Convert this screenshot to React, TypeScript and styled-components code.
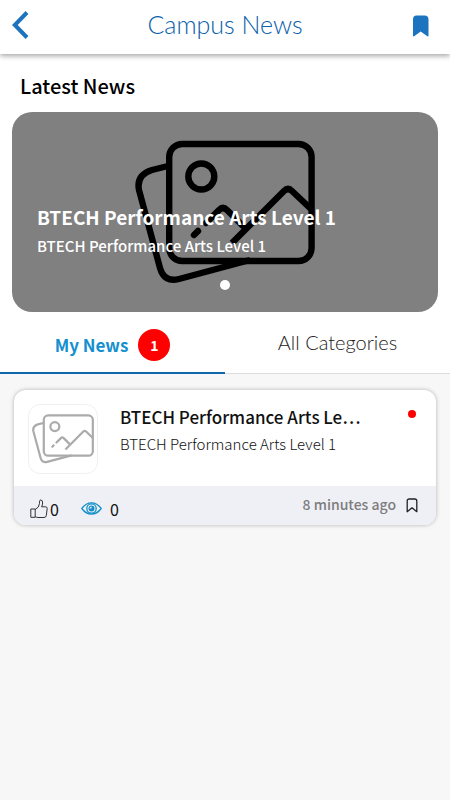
import React from "react";
import styled, { createGlobalStyle } from "styled-components";

const sans = `"Noto Sans CJK KR", "Noto Sans", sans-serif`;
const light = `Lato, "Open Sans", sans-serif`;

const GlobalStyle = createGlobalStyle`
  * { box-sizing: border-box; }
  body { margin: 0; background: #f7f7f7; font-family: ${sans}; color: #000; }
  button { border: 0; padding: 0; margin: 0; background: none; font: inherit; color: inherit; cursor: pointer; }
  h1, h2, h3, p { margin: 0; }
  svg { display: block; }
`;

const Page = styled.div`
  display: flex;
  flex-direction: column;
  min-height: 100vh;
`;

const Header = styled.header`
  display: grid;
  grid-template-columns: 1fr auto 1fr;
  align-items: center;
  height: 54px;
  padding: 0 12px 4px;
  background: #fff;
  box-shadow: 0 2px 5px rgba(0, 0, 0, 0.35);
  z-index: 1;
`;

const HeaderTitle = styled.h1`
  padding-bottom: 2px;
  font-family: ${light};
  font-weight: 300;
  font-size: 25px;
  line-height: 32px;
  color: #0a60ab;
`;

const IconButton = styled.button<{ $end?: boolean }>`
  && {
    display: flex;
    align-items: center;
    justify-self: ${(p) => (p.$end ? "end" : "start")};
    padding-right: ${(p) => (p.$end ? 8 : 0)}px;
    color: #1b74bd;
  }
`;

const Latest = styled.section`
  padding: 16px 12px 0;
  background: #fff;
`;

const SectionTitle = styled.h2`
  padding-left: 8px;
  margin-bottom: 10px;
  font-weight: 500;
  font-size: 20px;
  line-height: 32px;
`;

const Hero = styled.article`
  position: relative;
  display: flex;
  justify-content: center;
  align-items: flex-start;
  height: 200px;
  padding-top: 28px;
  border-radius: 20px;
  background: #808080;
`;

const HeroText = styled.div`
  position: absolute;
  left: 25px;
  right: 25px;
  top: 90px;
  color: #fff;
`;

const HeroTitle = styled.h3`
  font-weight: 700;
  font-size: 19px;
  line-height: 30px;
`;

const HeroSubtitle = styled.p`
  font-weight: 500;
  font-size: 15px;
  line-height: 28px;
`;

const PagerDot = styled.button`
  && {
    position: absolute;
    bottom: 22px;
    left: calc(50% - 5px);
    width: 10px;
    height: 10px;
    border-radius: 50%;
    background: #fff;
  }
`;

const Tabs = styled.div`
  display: grid;
  grid-template-columns: 1fr 1fr;
  height: 62px;
  background: #fff;
`;

const Tab = styled.button<{ $active?: boolean }>`
  && {
    display: flex;
    align-items: center;
    justify-content: center;
    gap: 10px;
    padding-top: ${(p) => (p.$active ? 6 : 0)}px;
    padding-bottom: ${(p) => (p.$active ? 0 : 2)}px;
    border-bottom: ${(p) => (p.$active ? "2px solid #0e68ab" : "1px solid #dcdcdc")};
    color: ${(p) => (p.$active ? "#1590cf" : "#222")};
    font-family: ${(p) => (p.$active ? sans : light)};
    font-weight: ${(p) => (p.$active ? 700 : 300)};
    font-size: ${(p) => (p.$active ? 17 : 20)}px;
    line-height: 28px;
  }
`;

const Badge = styled.span`
  width: 32px;
  height: 32px;
  border-radius: 50%;
  background: #f00;
  color: #fff;
  font-size: 14px;
  line-height: 32px;
  text-align: center;
`;

const Feed = styled.main`
  flex: 1;
  padding: 16px 14px;
`;

const Card = styled.article`
  overflow: hidden;
  border-radius: 12px;
  background: #fff;
  box-shadow: 0 0 4px rgba(0, 0, 0, 0.28);
`;

const CardBody = styled.div`
  display: flex;
  align-items: flex-start;
  height: 96px;
  padding: 14px 20px 0 14px;
`;

const Thumb = styled.div`
  display: flex;
  align-items: center;
  justify-content: center;
  flex: none;
  width: 70px;
  height: 70px;
  margin-right: 22px;
  border: 1px solid #f0f0f0;
  border-radius: 12px;
  color: #ababab;
`;

const CardText = styled.div`
  flex: 1;
  min-width: 0;
`;

const CardTitle = styled.h3`
  overflow: hidden;
  text-overflow: ellipsis;
  white-space: nowrap;
  font-weight: 500;
  font-size: 17px;
  line-height: 26px;
  color: #111;
`;

const CardSubtitle = styled.p`
  font-weight: 300;
  font-size: 15px;
  line-height: 28px;
  color: #111;
`;

const Unread = styled.span`
  width: 8px;
  height: 8px;
  margin-top: 6px;
  border-radius: 50%;
  background: #f00;
`;

const CardFooter = styled.footer`
  display: flex;
  align-items: center;
  height: 39px;
  padding: 0 18px 0 16px;
  background: #efeff6;
`;

const Stat = styled.button<{ $gap: number }>`
  && {
    display: flex;
    align-items: center;
    gap: ${(p) => p.$gap}px;
    margin-right: 22px;
    padding-top: 6px;
    font-size: 16px;
    line-height: 24px;
    color: #111;
  }
`;

const Time = styled.time`
  margin-left: auto;
  margin-right: 10px;
  padding-bottom: 4px;
  font-weight: 500;
  font-size: 14px;
  line-height: 24px;
  color: #7d7d7d;
`;

const Gallery = ({ width }: { width: number }) => (
  <svg width={width} viewBox="0 0 180 145" fill="none" stroke="currentColor" strokeWidth="6.4" strokeLinecap="round" strokeLinejoin="round" aria-hidden="true">
    <rect x="34.2" y="4" width="142.4" height="117" rx="13" />
    <circle cx="66.3" cy="36.5" r="13" />
    <path strokeLinecap="butt" d="M33 26 17 30Q1 35 4 50L25 128Q29 143 44 139L115 120" />
    <path d="M97 103 149 51Q153 47 157 51L176 69" strokeLinecap="butt" />
    <path d="M71 83 84 70Q88 66 92 70L108 86M59 95 63 91" />
  </svg>
);

const Back = () => (
  <svg width="17" height="28" viewBox="0 0 17 28" fill="none" stroke="currentColor" strokeWidth="4" aria-hidden="true">
    <path d="M15 1.5 2.8 14 15 26.5" />
  </svg>
);

const SavedMark = () => (
  <svg width="18" height="22" viewBox="0 -1 18 22" overflow="visible" fill="currentColor" aria-hidden="true">
    <path d="M4.5.5h8Q16.5.5 16.5 4.5V20.5Q16.5 22 15 21L8.7 16.5 2.5 21Q1 22 1 20.5V4.5Q1 .5 4.5.5Z" />
  </svg>
);

const Bookmark = () => (
  <svg width="12" height="15" viewBox="0 0 12 15" fill="none" stroke="#222" strokeWidth="1.3" strokeLinejoin="round" aria-hidden="true">
    <path d="M1.2 3Q1.2 1 3.2 1H8.8Q10.8 1 10.8 3V13.7L6 9.8 1.2 13.7Z" />
  </svg>
);

const Thumbs = () => (
  <svg width="18" height="20" viewBox="0 0 18 20" fill="none" stroke="#333" strokeWidth="1" strokeLinejoin="round" aria-hidden="true">
    <path d="M.8 10H5.2V18.3H.8ZM5.2 10.5Q9.2 8.5 9.5 4.5V2.8Q9.5 1 10.8 1Q12.8 1 12.6 4Q12.5 6 11.6 7.8H15.5Q17.3 7.8 17.2 9.6L16.3 16.5Q16 18.5 14 18.5H8Q6.5 18.5 5.2 17.5" />
  </svg>
);

const Eye = () => (
  <svg width="21" height="13" viewBox="0 0 21 13" fill="none" stroke="#1490c8" strokeWidth="1.3" aria-hidden="true">
    <path d="M.8 6.5Q5 .8 10.5.8T20.2 6.5Q16 12.2 10.5 12.2T.8 6.5Z" />
    <circle cx="10.5" cy="6.5" r="4.7" />
    <circle cx="10.5" cy="6.5" r="3" fill="#1490c8" stroke="none" />
    <path d="M10.5 4.5V6.5H8.5Q8.7 4.7 10.5 4.5" fill="#efeff6" stroke="none" />
  </svg>
);

export default function App() {
  return (
    <Page>
      <GlobalStyle />
      <Header>
        <IconButton aria-label="Back"><Back /></IconButton>
        <HeaderTitle>Campus News</HeaderTitle>
        <IconButton $end aria-label="Saved news"><SavedMark /></IconButton>
      </Header>
      <Latest>
        <SectionTitle>Latest News</SectionTitle>
        <Hero>
          <Gallery width={180} />
          <HeroText>
            <HeroTitle>BTECH Performance Arts Level 1</HeroTitle>
            <HeroSubtitle>BTECH Performance Arts Level 1</HeroSubtitle>
          </HeroText>
          <PagerDot aria-label="Slide one" />
        </Hero>
      </Latest>
      <Tabs role="tablist">
        <Tab $active role="tab" aria-selected="true">My News<Badge>1</Badge></Tab>
        <Tab role="tab" aria-selected="false">All Categories</Tab>
      </Tabs>
      <Feed>
        <Card>
          <CardBody>
            <Thumb><Gallery width={62} /></Thumb>
            <CardText>
              <CardTitle>BTECH Performance Arts Le…</CardTitle>
              <CardSubtitle>BTECH Performance Arts Level 1</CardSubtitle>
            </CardText>
            <Unread />
          </CardBody>
          <CardFooter>
            <Stat $gap={2} aria-label="Like, 0"><Thumbs />0</Stat>
            <Stat $gap={8} aria-label="Views, 0"><Eye />0</Stat>
            <Time>8 minutes ago</Time>
            <IconButton aria-label="Save"><Bookmark /></IconButton>
          </CardFooter>
        </Card>
      </Feed>
    </Page>
  );
}
